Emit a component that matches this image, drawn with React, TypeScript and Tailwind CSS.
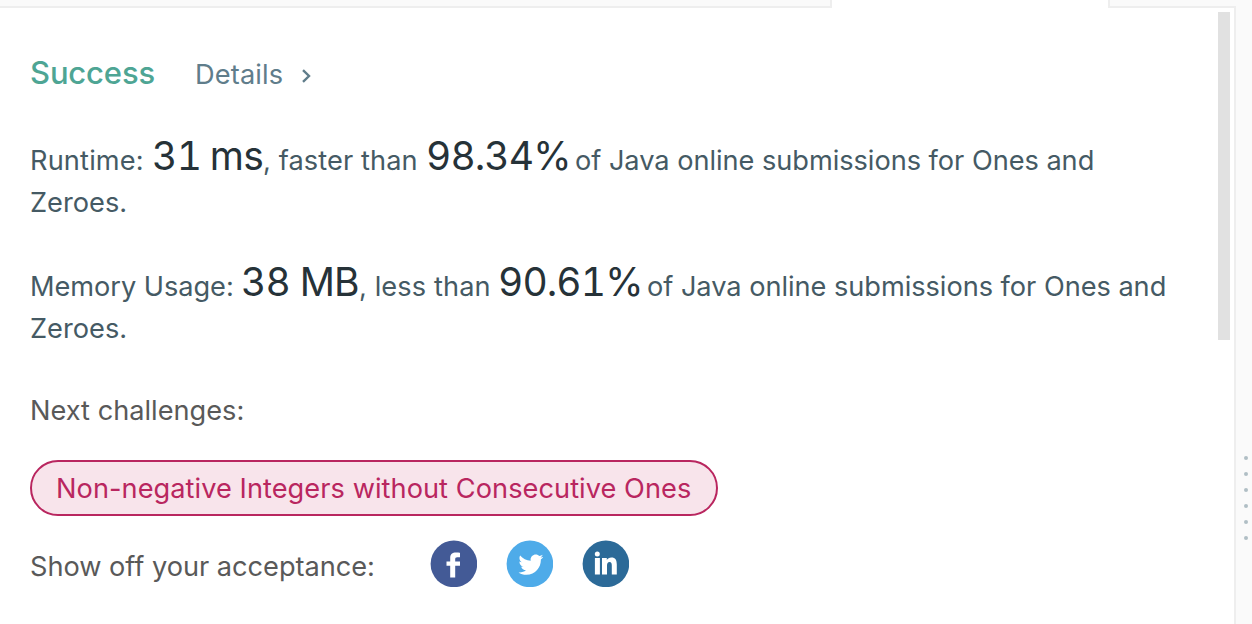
import { FaTwitter } from "react-icons/fa";

const figure = "shrink-0 whitespace-pre text-[39px] text-[#263238] tabular-nums";
const dots = [0, 1, 2, 3, 4, 5];
const badge = "size-[47px] shrink-0";

export default function App() {
  return (
    <div className="flex h-[624px] w-[1252px] overflow-hidden bg-[#fafafa] font-['Inter',sans-serif] text-[27.2px] leading-[42px] text-[#455a64]">
      <div className="flex w-[1236px] shrink-0 flex-col border-r-2 border-[#eeeeee] bg-white">
        <div className="-mr-0.5 flex h-2 shrink-0">
          <div className="w-[832px] border-b-2 border-r-2 border-[#eeeeee] bg-[#fafafa]" />
          <div className="w-[276px]" />
          <div className="flex-1 border-b-2 border-l-2 border-[#eeeeee] bg-[#fafafa]" />
        </div>
        <div className="flex flex-1 items-start">
          <main className="flex w-[1218px] shrink-0 flex-col items-start whitespace-nowrap pl-[30px]">
            <div className="mt-[44px] flex h-[42px] items-baseline">
              <span className="w-[165px] text-[31px] font-medium tracking-[-0.15px] text-[#4ea594]">Success</span>
              <span className="tracking-[0.15px] text-[#607d8b]">Details</span>
              <svg className="ml-[18px] h-[15px] w-[10px]" viewBox="0 0 10 15" fill="none" stroke="#607d8b" strokeWidth="2.4">
                <path d="M2 1.2 8 7 2 12.8" />
              </svg>
            </div>
            <div className="mt-[41px] flex h-[45px] items-baseline">
              <span className="w-[122px] tracking-[0.15px]">Runtime:</span>
              <span className={`${figure} w-[111px] tracking-[-0.6px] [word-spacing:-1.6px]`}>31 ms</span>
              <span className="w-[163px] tracking-[0.1px]">, faster than</span>
              <span className={`${figure} w-[149px] tracking-[-0.9px]`}>98.34%</span>
              <span className="tracking-[-0.04px]">of Java online submissions for Ones and</span>
            </div>
            <div className="mt-0.5">Zeroes.</div>
            <div className="mt-[37px] flex h-[45px] items-baseline">
              <span className="w-[211px] tracking-[-0.05px]">Memory Usage:</span>
              <span className={`${figure} w-[118px] tracking-[-0.8px]`}>38 MB</span>
              <span className="w-[139px] tracking-[0.1px]">, less than</span>
              <span className={`${figure} w-[149px] tracking-[-0.9px]`}>90.61%</span>
              <span className="tracking-[-0.04px]">of Java online submissions for Ones and</span>
            </div>
            <div className="mt-0.5">Zeroes.</div>
            <div className="mt-[40px] text-[#595959]">Next challenges:</div>
            <div className="mt-[28px] flex h-14 w-[688px] items-center rounded-full border-2 border-[#b9265f] bg-[#f8e4eb] pl-6 pt-0.5 tracking-[0.05px] text-[#b9265f]">Non-negative Integers without Consecutive Ones</div>
            <div className="mt-[24px] flex h-[47px] items-center text-[#595959]">
              <span className="w-[400px] pt-1.5 tracking-[-0.03px]">Show off your acceptance:</span>
              <div className="flex gap-[29px] text-white">
                <svg className={badge} viewBox="0 0 47 47" fill="currentColor">
                  <circle cx="23.9" cy="23.9" r="23.3" fill="#435a96" />
                  <path d="M30 12.7v4.5h-2.7c-1.7 0-2.1.8-2.1 2v2.2H30v4.4h-4.8v11.8h-5V25.8h-3.7v-4.4h3.7v-3.5c0-3.8 2.2-5.5 5.8-5.5 1.7 0 3.2.1 4 .3z" />
                </svg>
                <svg className={badge} viewBox="0 0 47 47" fill="currentColor">
                  <circle cx="23.9" cy="23.9" r="23.3" fill="#4eabe9" />
                  <FaTwitter x="12.4" y="12.1" size={25} />
                </svg>
                <svg className={badge} viewBox="0 0 47 47" fill="currentColor">
                  <circle cx="23.9" cy="23.9" r="23.3" fill="#2c6a98" />
                  <circle cx="15.3" cy="13.9" r="2.5" />
                  <path d="M12.9 18h5v16.5h-5zM20 18h4.8v2.1c.9-1.5 2.5-2.5 4.6-2.5 4 0 5.4 2.5 5.4 7v9.9h-5v-9c0-2.3-.5-3.6-2.2-3.6-1.9 0-2.6 1.4-2.6 3.7v8.9h-5z" />
                </svg>
              </div>
            </div>
          </main>
          <div className="mt-1 h-[328px] w-3 bg-[#e1e1e1]" />
        </div>
      </div>
      <div className="flex w-4 flex-col items-center gap-3 pl-1 pt-[456px]">
        {dots.map((dot) => <span key={dot} className="size-1 shrink-0 rounded-full bg-[#b0bec5]" />)}
      </div>
    </div>
  );
}
